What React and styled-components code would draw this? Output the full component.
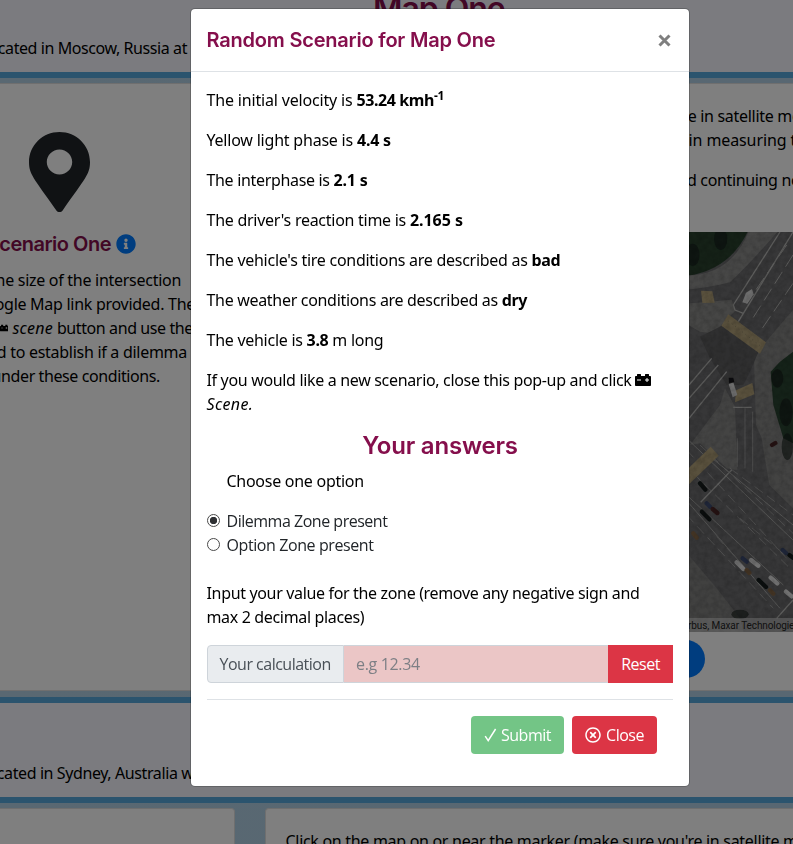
import React from 'react';
import styled, { createGlobalStyle } from 'styled-components';
import { FaMapMarkerAlt, FaInfoCircle, FaCarBattery, FaRegTimesCircle } from 'react-icons/fa';

const BRAND = '#850f4c';

const GlobalStyle = createGlobalStyle`
  *, *::before, *::after { box-sizing: border-box; }
  html, body { margin: 0; height: 844px; overflow: hidden; }
  body {
    font: 400 16px/24px "Noto Sans", "Open Sans", sans-serif;
    letter-spacing: -0.27px;
    color: #000;
    background: #b2d0e4;
  }
  p, h2, h3, h4, h5 { margin: 0; }
`;

/* ---------- page behind the dialog ---------- */

const Page = styled.div`
  display: flex;
  flex-direction: column;
  height: 844px;
  overflow: hidden;
`;

const Band = styled.section`
  flex: none;
  display: flex;
  flex-direction: column;
  justify-content: flex-end;
  height: ${(p) => p.$height}px;
  padding-bottom: 12px;
  background: #f6f7ff;
  border-top: ${(p) => (p.$first ? '0' : '6px solid #56a8dc')};
  border-bottom: 6px solid #56a8dc;
  white-space: nowrap;
`;

const BandTitle = styled.h2`
  align-self: flex-start;
  margin: 0 0 8px 373px;
  font: 600 32px/38px Inter, sans-serif;
  letter-spacing: -1.05px;
  color: ${BRAND};
`;

const BandText = styled.p`
  width: ${(p) => p.$width}px;
  display: flex;
  justify-content: flex-end;
  letter-spacing: ${(p) => p.$ls}px;
`;

const Columns = styled.div`
  flex: none;
  display: grid;
  grid-template-columns: 235px 528px;
  column-gap: 30px;
  height: ${(p) => p.$height}px;
  padding: 5px 0 6px;
  background: linear-gradient(90deg, #b2d0e4, #b0cfe4);
`;

const Card = styled.article`
  min-width: 0;
  overflow: hidden;
  background: #fff;
  border: 1px solid #dfdfdf;
  border-left-width: ${(p) => (p.$cutLeft ? 0 : 1)}px;
  border-right-width: ${(p) => (p.$cutLeft ? 1 : 0)}px;
  border-radius: ${(p) => (p.$cutLeft ? '0 4px 4px 0' : '4px 0 0 4px')};
`;

const Marker = styled(FaMapMarkerAlt)`
  display: block;
  width: 61px;
  height: 80px;
  margin: 48px 0 0 29px;
  color: #212529;
`;

const CardTitle = styled.h4`
  display: flex;
  justify-content: flex-end;
  align-items: center;
  gap: 5px;
  width: 136px;
  height: 24px;
  margin: 20px 0 12px;
  font: 600 20px/24px Inter, sans-serif;
  letter-spacing: -0.5px;
  color: ${BRAND};
  white-space: nowrap;
  svg { flex: none; color: #007bff; }
`;

const RightLine = styled.p`
  display: flex;
  justify-content: flex-end;
  align-items: center;
  gap: 4px;
  width: ${(p) => p.$end}px;
  height: 24px;
  letter-spacing: ${(p) => p.$ls ?? -0.4}px;
  white-space: nowrap;
`;

const Instruction = styled.p`
  margin: 0 0 ${(p) => p.$after || 0}px;
  padding-left: ${(p) => p.$x}px;
  letter-spacing: ${(p) => p.$ls ?? -0.3}px;
  white-space: nowrap;
`;

const Instructions = styled.div`
  padding-top: 20px;
`;

const MapFrame = styled.figure`
  position: relative;
  width: 113px;
  height: 400px;
  margin: 0 0 0 414px;
  overflow: hidden;
  svg { display: block; }
`;

const Attribution = styled.figcaption`
  position: absolute;
  inset: auto 0 0 0;
  height: 14px;
  padding-left: 8px;
  font: 10px/15px Roboto, sans-serif;
  letter-spacing: -0.1px;
  color: #222;
  background: rgba(245, 245, 245, 0.42);
  white-space: nowrap;
`;

const RoundButton = styled.button`
  display: block;
  width: 38px;
  height: 38px;
  margin: 8px 0 0 401px;
  border: 0;
  border-radius: 50%;
  background: #007bff;
`;

/* ---------- dialog ---------- */

const Backdrop = styled.div`
  position: fixed;
  inset: 0;
  padding: 8px 0 0 190px;
  background: rgba(0, 0, 0, 0.5);
`;

const Dialog = styled.div`
  width: 500px;
  height: 778.8px;
  background: #fff;
  background-clip: padding-box;
  border: 1px solid rgba(0, 0, 0, 0.2);
  border-radius: 5px;
`;

const DialogHeader = styled.header`
  display: flex;
  justify-content: space-between;
  align-items: center;
  height: 63px;
  padding: 0 18.5px 0 15.5px;
  border-bottom: 1px solid #dee2e6;
`;

const DialogTitle = styled.h5`
  font: 600 20px/30px Inter, sans-serif;
  letter-spacing: -0.21px;
  color: ${BRAND};
`;

const Dismiss = styled.button`
  display: flex;
  padding: 0;
  border: 0;
  background: none;
  color: #7f7f7f;
`;

const DialogBody = styled.div`
  padding: 16px 16px 0;
`;

const Para = styled.p`
  margin: 0 0 16px -0.5px;
  letter-spacing: ${(p) => p.$ls ?? -0.27}px;
  white-space: nowrap;
  padding-left: ${(p) => p.$indent || 0}px;
  svg { vertical-align: -2px; }
`;

const Value = styled.b`
  letter-spacing: ${(p) => p.$ls ?? -0.3}px;
  sup { font-size: 12px; line-height: 0; position: relative; top: -0.5em; vertical-align: baseline; letter-spacing: -0.2px; }
`;

const Emph = styled.em`
  letter-spacing: ${(p) => p.$ls ?? 0.35}px;
`;

const AnswersTitle = styled.h3`
  margin-bottom: 8px;
  font: 600 24px/28.8px Inter, sans-serif;
  letter-spacing: -0.2px;
  color: ${BRAND};
  text-align: center;
`;

const Options = styled.div`
  margin-bottom: 24px;
`;

const Option = styled.label`
  display: flex;
  align-items: center;
  gap: 6.5px;
  height: 24px;
  font-family: "Open Sans", sans-serif;
  letter-spacing: ${(p) => p.$ls}px;
  color: #212529;
`;

const Radio = styled.input`
  appearance: none;
  width: 13px;
  height: 13px;
  margin: 0;
  border: 1px solid #4a4a4a;
  border-radius: 50%;
  background: #fff;
  &:checked { background: radial-gradient(circle, #2f3134 0 3.4px, #fff 4px); }
`;

const InputGroup = styled.div`
  display: grid;
  grid-template-columns: 137px 1fr 65px;
  height: 38px;
  font-family: "Open Sans", sans-serif;
`;

const InputLabel = styled.span`
  padding-left: 11.5px;
  line-height: 36px;
  letter-spacing: -0.5px;
  color: #495057;
  background: #e9ecef;
  border: 1px solid #ced4da;
  border-radius: 4px 0 0 4px;
`;

const NumberInput = styled.input`
  min-width: 0;
  padding: 0 12px;
  font: 16px/36px "Open Sans", sans-serif;
  letter-spacing: -0.33px;
  background: #ebc6c6;
  border: 1px solid #ced4da;
  border-width: 1px 0;
  border-radius: 0;
  &::placeholder { color: #7d7f85; opacity: 1; }
`;

const Button = styled.button`
  display: flex;
  align-items: center;
  justify-content: center;
  gap: ${(p) => p.$gap || 0}px;
  width: ${(p) => p.$width}px;
  height: 38px;
  padding: 0;
  font: 16px/36px "Open Sans", sans-serif;
  letter-spacing: -0.5px;
  color: #fff;
  background: ${(p) => (p.$tone === 'success' ? '#28a745' : '#dc3545')};
  border: 0;
  border-radius: ${(p) => (p.$square ? 0 : 4)}px;
  &:disabled { opacity: 0.65; }
`;

const DialogFooter = styled.footer`
  display: flex;
  justify-content: flex-end;
  gap: 8px;
  margin-top: 16px;
  padding: 16px;
  border-top: 1px solid #dee2e6;
`;

function SatelliteMap() {
  const lanes = [
    'M20 640L339 945', 'M20 810L310 1080', 'M27 835L300 1150', 'M85 690L339 900',
  ];
  const dashes = [
    'M60 660L339 925', 'M150 730L339 870', 'M40 745L330 1030', 'M20 870L280 1150',
    'M180 880L310 985', 'M110 935L250 1090', 'M20 675L320 1000',
  ];
  return (
    <svg width="113" height="400" viewBox="0 21 339 1200" preserveAspectRatio="none">
      <defs>
        <filter id="soft" x="0" y="0" width="100%" height="100%"><feGaussianBlur stdDeviation="2.2" /></filter>
        <filter id="grain" x="0" y="0" width="100%" height="100%">
          <feTurbulence type="fractalNoise" baseFrequency="0.06" numOctaves="3" />
          <feColorMatrix values="0 0 0 0 0  0 0 0 0 0  0 0 0 0 0  0.9 0 0 0 -0.3" />
        </filter>
      </defs>
      <g filter="url(#soft)">
        <path fill="#6e6e70" d="M0 0H339V1240H0z" />
        <path fill="#29432f" d="M0 0H212Q160 130 27 152H0z" />
        <path fill="#8e8e8d" d="M205 21H292Q215 110 150 172Q80 190 0 196V152Q150 158 205 21z" />
        <path fill="#8c8c8a" d="M0 238L155 224L165 258L100 325L60 320L0 285z" />
        <path fill="#868685" d="M339 255L262 345L222 400L228 600L245 640L268 780L339 850z" />
        <path fill="#2b4532" d="M339 380L300 410L272 440L280 540L310 640L339 655z" />
        <path fill="#888887" d="M135 490L165 545L172 735L140 730L60 655L30 660L120 540z" />
        <path fill="#828281" d="M0 960L110 1090L180 1180L190 1221H0z" />
        <path fill="#5f5f61" d="M60 335L130 300L240 370L210 440L190 480L140 480L90 400z" />
        <g fill="#131c17" opacity=".6">
          <ellipse cx="38" cy="90" rx="21" ry="34" /><ellipse cx="122" cy="42" rx="20" ry="34" />
          <ellipse cx="292" cy="460" rx="18" ry="28" /><ellipse cx="318" cy="562" rx="20" ry="42" />
          <ellipse cx="322" cy="665" rx="17" ry="40" /><ellipse cx="180" cy="1168" rx="26" ry="14" />
        </g>
        <g stroke="#b9b9b7" fill="none">
          <path strokeWidth="4" d="M339 21L175 290M300 21L160 240L165 255L190 265" />
          <path strokeWidth="3" strokeDasharray="42 18" d="M339 90L215 285M320 60L200 235M339 175L240 320" />
          <path strokeWidth="4" d="M95 400L27 480M140 440L27 580M115 420L27 520M160 547H215M155 735L62 832M339 1125L290 1180" />
          <path strokeWidth="3" opacity=".6" d="M195 550V730M172 640V725M218 560V740" />
          {lanes.map((d) => <path key={d} strokeWidth="3" opacity=".75" d={d} />)}
          {dashes.map((d) => <path key={d} strokeWidth="3" opacity=".6" strokeDasharray="30 16" d={d} />)}
        </g>
        <g fill="#b3a27a">
          <path d="M145 268L258 352L240 386L124 302z" />
          <path d="M63 197L97 199L104 233L67 234z" />
          <path d="M168 496L217 474L223 508L165 532z" />
          <path d="M92 665L116 692L27 778V728z" />
        </g>
        <path stroke="#8e8468" strokeWidth="3" strokeDasharray="3 10" fill="none" d="M145 288L240 362" />
        <g fill="#dadada">
          <path d="M198 203L216 192L221 208L202 236L187 232z" />
          <path d="M146 478L160 472L172 510L158 517z" />
        </g>
        <path fill="#19191a" d="M146 458L160 458L163 472L147 474z" />
        <g strokeWidth="13" strokeLinecap="round" fill="none">
          <path stroke="#151f1d" d="M60 775L76 794M66 860L88 883M236 1065L258 1086M328 990L339 998" />
          <path stroke="#3e4c70" d="M80 835L90 845M188 1000L200 1010M308 975L318 984" />
          <path stroke="#4c2525" d="M98 852L112 864M276 660L286 654" />
          <path stroke="#e2e2e2" d="M170 1012L190 1032M213 1005L235 1022M272 1058L292 1075M318 1100L335 1114" />
          <path stroke="#87694a" d="M40 925L50 938M200 1035L208 1044M270 1096L280 1106" />
        </g>
      </g>
      <path filter="url(#grain)" opacity=".3" d="M0 0H339V1240H0z" />
    </svg>
  );
}

function Background() {
  return (
    <Page>
      <Band $height={78} $first>
        <BandTitle>Map One</BandTitle>
        <BandText $width={187} $ls={-0.42}>located in Moscow, Russia at</BandText>
      </Band>
      <Columns $height={619}>
        <Card $cutLeft>
          <Marker preserveAspectRatio="none" />
          <CardTitle>Scenario One <FaInfoCircle size={20} /></CardTitle>
          <RightLine $end={181} $ls={-0.28}>Find the size of the intersection</RightLine>
          <RightLine $end={195} $ls={-0.28}>Google Map link provided. The</RightLine>
          <RightLine $end={193}>
            <FaCarBattery size={16} /><Emph $ls={0.2}>scene</Emph><span>button and use the</span>
          </RightLine>
          <RightLine $end={187} $ls={-0.28}>need to establish if a dilemma</RightLine>
          <RightLine $end={160}>under these conditions.</RightLine>
        </Card>
        <Card>
          <Instructions>
            <Instruction $x={386}>you're in satellite mode</Instruction>
            <Instruction $x={422.5} $after={16} $ls={-0.1}>in measuring the</Instruction>
            <Instruction $x={421} $after={40} $ls={-0.35}>d continuing now</Instruction>
          </Instructions>
          <MapFrame>
            <SatelliteMap />
            <Attribution>rbus, Maxar Technologies</Attribution>
          </MapFrame>
          <RoundButton aria-label="Map action" />
        </Card>
      </Columns>
      <Band $height={106}>
        <BandText $width={212} $ls={-0.4}>located in Sydney, Australia with</BandText>
      </Band>
      <Columns $height={60}>
        <Card $cutLeft />
        <Card>
          <Instructions>
            <Instruction $x={19.5}>
              Click on the map on or near the marker (make sure you're in satellite mode
            </Instruction>
          </Instructions>
        </Card>
      </Columns>
    </Page>
  );
}

export default function App() {
  return (
    <>
      <GlobalStyle />
      <Background />
      <Backdrop>
        <Dialog role="dialog">
          <DialogHeader>
            <DialogTitle>Random Scenario for Map One</DialogTitle>
            <Dismiss aria-label="Dismiss">
              <svg width="13" height="13" viewBox="0 0 13 13" stroke="currentColor" strokeWidth="3">
                <path d="M1.5 1.5L11.5 11.5M11.5 1.5L1.5 11.5" />
              </svg>
            </Dismiss>
          </DialogHeader>
          <DialogBody>
            <Para $ls={-0.17}>The initial velocity is <Value $ls={-0.42}>53.24 kmh<sup>-1</sup></Value></Para>
            <Para $ls={-0.21}>Yellow light phase is <Value $ls={-0.2}>4.4 s</Value></Para>
            <Para $ls={-0.33}>The interphase is <Value $ls={-0.2}>2.1 s</Value></Para>
            <Para>The driver's reaction time is <Value $ls={-0.04}>2.165 s</Value></Para>
            <Para>The vehicle's tire conditions are described as <Value $ls={-0.4}>bad</Value></Para>
            <Para $ls={-0.31}>The weather conditions are described as <Value $ls={-0.4}>dry</Value></Para>
            <Para>The vehicle is <Value>3.8</Value> m long</Para>
            <Para $ls={-0.33}>
              If you would like a new scenario, close this pop-up and click <FaCarBattery size={16} />
              <br />
              <Emph>Scene.</Emph>
            </Para>
            <AnswersTitle>Your answers</AnswersTitle>
            <Para $indent={20}>Choose one option</Para>
            <Options>
              <Option $ls={-0.48}><Radio type="radio" name="zone" defaultChecked />Dilemma Zone present</Option>
              <Option $ls={-0.41}><Radio type="radio" name="zone" />Option Zone present</Option>
            </Options>
            <Para $ls={-0.34}>
              Input your value for the zone (remove any negative sign and
              <br />
              max 2 decimal places)
            </Para>
            <InputGroup>
              <InputLabel>Your calculation</InputLabel>
              <NumberInput placeholder="e.g 12.34" />
              <Button $square>Reset</Button>
            </InputGroup>
            <DialogFooter>
              <Button $tone="success" $width={93} $gap={4} disabled>
                <svg width="13" height="14" viewBox="0 0 13 14" fill="none" stroke="currentColor" strokeWidth="1.5">
                  <path d="M1.2 8.2L4.2 12.6L11.6 1" />
                </svg>
                Submit
              </Button>
              <Button $width={85} $gap={5}><FaRegTimesCircle size={16} />Close</Button>
            </DialogFooter>
          </DialogBody>
        </Dialog>
      </Backdrop>
    </>
  );
}
